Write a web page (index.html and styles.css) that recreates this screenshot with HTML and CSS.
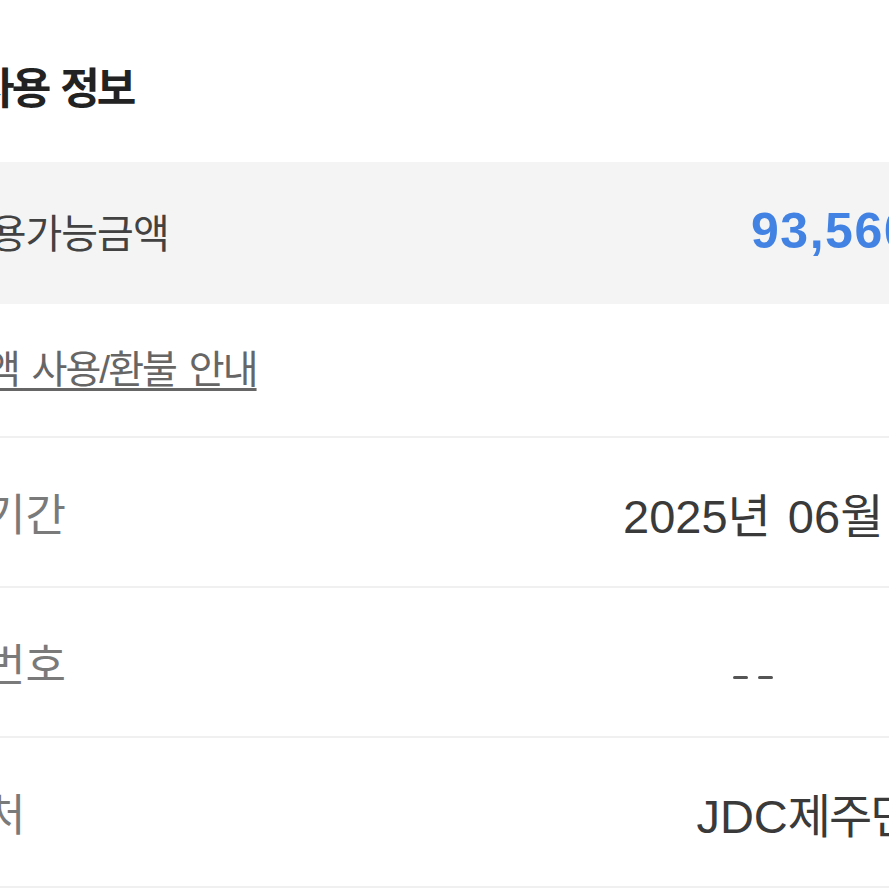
FILE: index.html
```html
<!DOCTYPE html>
<html lang="ko">
<head>
<meta charset="utf-8">
<title>사용 정보</title>
<link rel="stylesheet" href="styles.css">
</head>
<body>
<div class="page">
  <h2 class="title">쿠폰 사용 정보</h2>
  <div class="row row-amount">
    <span class="label label-strong">총 사용가능금액</span>
    <span class="amount">93,560<span class="ko">원</span><svg class="chev" viewBox="0 0 24 24" width="24" height="24"><path d="M9 5l7 7-7 7" fill="none" stroke="#999" stroke-width="2"/></svg></span>
  </div>
  <div class="row row-link">
    <a class="guide" href="#">잔액 사용/환불 안내</a>
  </div>
  <div class="row row-item">
    <span class="label">유효기간</span>
    <span class="value value-date">2025<span class="ko">년</span> 06<span class="ko">월</span> 30<span class="ko">일</span></span>
  </div>
  <div class="row row-item">
    <span class="label">쿠폰번호</span>
    <span class="value masked"><i class="mark"></i><i class="mark"></i></span>
  </div>
  <div class="row row-item">
    <span class="label">사용처</span>
    <span class="value">JDC<span class="ko">제주면세점</span></span>
  </div>
</div>
</body>
</html>
```

FILE: styles.css
```css
html, body {
  margin: 0;
  padding: 0;
  background: #ffffff;
  overflow: hidden;
}

body {
  font-family: "Liberation Sans", "Noto Sans CJK KR", sans-serif;
  color: #333333;
}

.page {
  margin-left: -96px;
  margin-right: -105px;
}

.ko {
  letter-spacing: -2px;
}

.title {
  margin: 0 0 0 -14px;
  height: 162px;
  box-sizing: border-box;
  padding: 8px 0 0 0;
  display: flex;
  align-items: center;
  font-size: 43px;
  font-weight: 700;
  letter-spacing: -3px;
  word-spacing: 3px;
  color: #222222;
}

.row {
  display: flex;
  align-items: center;
  justify-content: space-between;
  white-space: nowrap;
}

.row-amount {
  height: 142px;
  box-sizing: border-box;
  padding-bottom: 4px;
  background: #f4f4f4;
}

.row-link {
  height: 134px;
  box-sizing: border-box;
  padding: 0 0 8px 47px;
  border-bottom: 2px solid #f0f0f0;
}

.row-item {
  height: 148px;
  border-bottom: 2px solid #f0f0f0;
}

.label {
  font-size: 44px;
  letter-spacing: 0;
  color: #7a7a7a;
}

.label-strong {
  font-size: 40px;
  letter-spacing: -1px;
  word-spacing: 4px;
  color: #424242;
}

.amount {
  display: flex;
  align-items: center;
  font-size: 50px;
  font-weight: 700;
  letter-spacing: 1.5px;
  color: #4282e3;
}

.chev {
  margin-left: 13px;
}

.guide {
  font-size: 39px;
  letter-spacing: -2px;
  word-spacing: 4px;
  color: #666666;
  text-decoration: underline;
  text-decoration-thickness: 3px;
  text-underline-offset: 5px;
}

.value {
  font-size: 47px;
  word-spacing: 4px;
  color: #3a3a3a;
}

.value-date {
  word-spacing: 6px;
}

.masked {
  display: flex;
  gap: 10px;
  width: 261px;
  padding-top: 30px;
}

.mark {
  display: block;
  width: 15px;
  height: 3px;
  background: #555555;
  border-radius: 2px;
}
```
